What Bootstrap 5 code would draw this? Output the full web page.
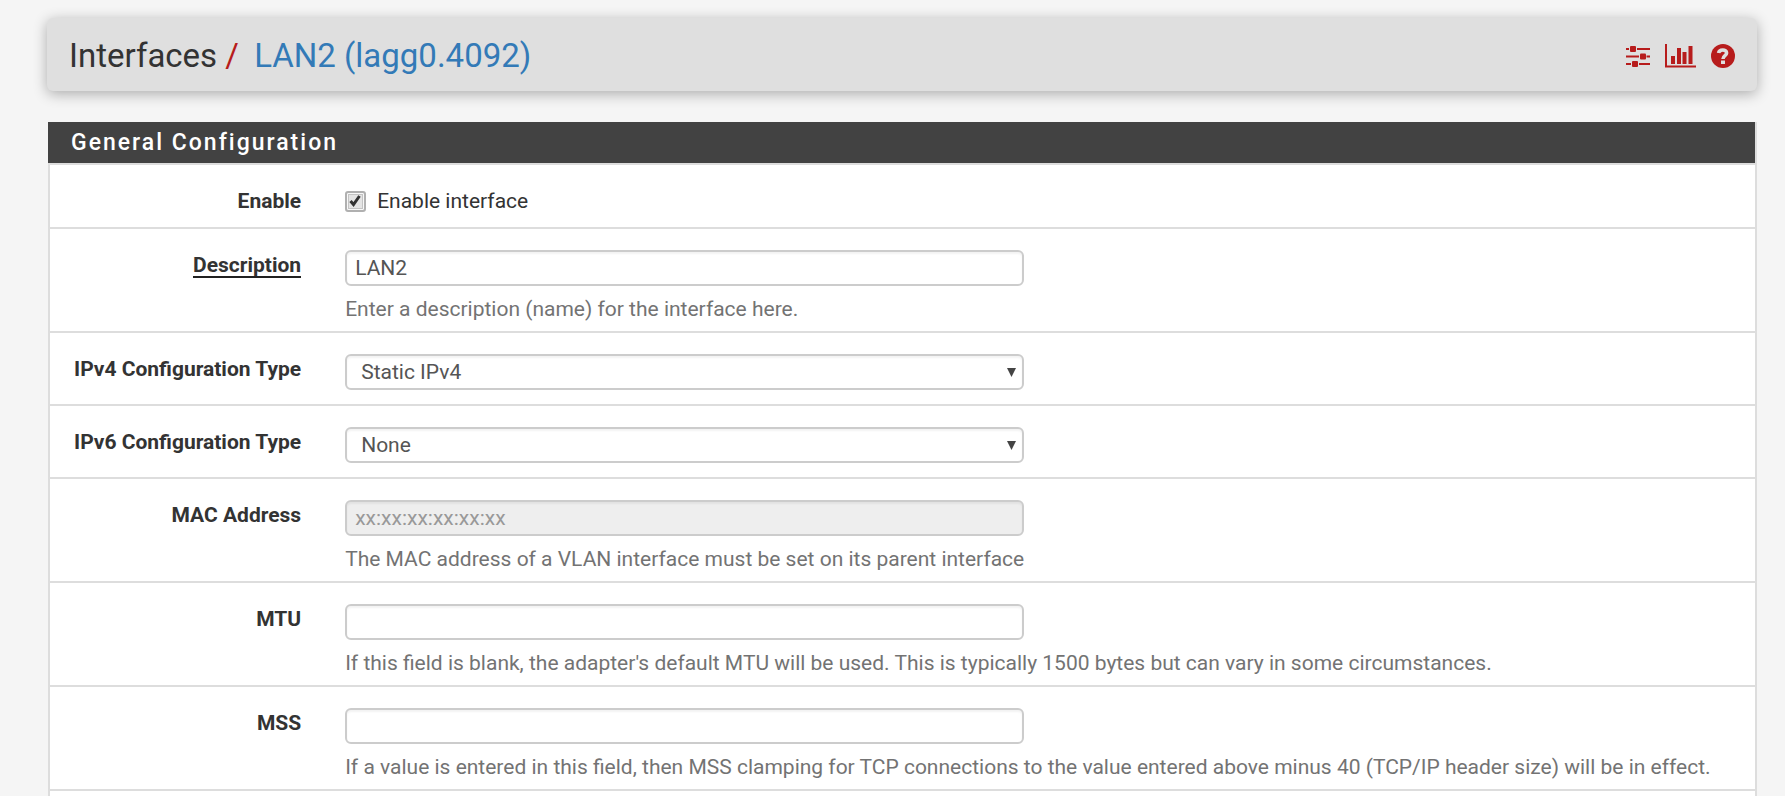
<!DOCTYPE html>
<html lang="en">
<head>
<meta charset="utf-8">
<meta name="viewport" content="width=device-width, initial-scale=1">
<title>Interfaces / LAN2 (lagg0.4092)</title>
<link rel="stylesheet" href="https://cdn.jsdelivr.net/npm/bootstrap@5.3.0/dist/css/bootstrap.min.css">
<style>
  body { background: #f5f5f5; color: #333; font-family: Roboto, "Liberation Sans", sans-serif; font-size: 21px; line-height: 30px; }
  .page { padding: 18px 28px 0 47px; }
  .page-header { background: #dfdfdf; border-radius: 6px; padding: 2px 22px 0 22px; min-height: 73px; margin-bottom: 31px; box-shadow: 0 3px 14px rgba(0,0,0,.3); }
  .page-header h1 { font-size: 33px; line-height: 40px; font-weight: 400; }
  .page-header h1 a { color: #337ab7; }
  .slash, .tools a { color: #b71c1c; }
  .slash { margin-right: 7px; }
  .tools { gap: 15px; }
  .tools svg { display: block; fill: currentColor; }
  .panel { background: #fff; border: 2px solid #ddd; border-width: 0 2px; margin-left: 1px; }
  .panel-title { background: #424242; color: #fff; font-size: 23px; line-height: 40px; font-weight: 500; letter-spacing: 2px; padding: 1px 23px 0; margin: 0 0 0 -2px; }
  .panel-body { border-top: 2px solid #ddd; }
  .field { border-bottom: 2px solid #ddd; padding: 21px 0 14px; }
  .field.has-help { padding-bottom: 7px; }
  .field.is-check { padding-bottom: 11px; }
  .field > .row { --bs-gutter-x: 44px; margin-left: -16px; margin-right: -14px; }
  .field label { line-height: 30px; }
  .name { font-weight: 700; }
  .required { border-bottom: 2px solid #212121; line-height: 22px; display: inline-block; }
  .field .form-control, .field .form-select { height: 36px; border: 2px solid #ccc; border-radius: 6px; padding: 0 8px; font-size: 21px; line-height: 30px; color: #555; box-shadow: inset 0 2px 2px rgba(0,0,0,.05); }
  .field .form-select { padding: 0 32px 0 14px; background: #fff url("data:image/svg+xml,%3Csvg xmlns='http://www.w3.org/2000/svg' viewBox='0 0 9 9'%3E%3Cpath fill='%23444' d='M0 0h9L4.500 9z'/%3E%3C/svg%3E") no-repeat right 6px center / 9px 9px; }
  .field .form-control:disabled { background: #eee; }
  .field .form-control::placeholder { color: #999; }
  .help { color: #737373; margin-top: 8px; }
  .field .tick { appearance: none; width: 21px; height: 21px; margin: 0 11px 0 0; border: 2px solid #b0b0b0; border-radius: 3px; background: #e8e8e8; box-shadow: inset 0 0 0 1px #f8f8f8, inset 0 0 0 2px #c4c4c4; }
  .field .tick:checked { background: #e4e4e4 url("data:image/svg+xml,%3Csvg xmlns='http://www.w3.org/2000/svg' viewBox='0 0 17 17'%3E%3Cpath fill='none' stroke='%23333' stroke-width='3' d='M3.500 8l3 3.500 6-8.500'/%3E%3C/svg%3E") center / 17px 17px no-repeat; }
</style>
</head>
<body>
<div class="page d-flex flex-column min-vh-100">
  <header class="page-header d-flex align-items-center justify-content-between">
    <h1 class="m-0">Interfaces <span class="slash">/</span> <a class="text-decoration-none" href="#">LAN2 (lagg0.4092)</a></h1>
    <nav class="tools d-flex align-items-center" aria-label="Page tools">
      <a href="#" aria-label="Related settings"><svg width="24" height="24" viewBox="0 0 24 24"><path d="M0 4h24v2H0zM0 11.500h24v2H0zM0 19h24v2H0z"/><path fill="#dfdfdf" d="M3 3h8v4H3zM13 10.500h7.500v4H13zM5 18h8v4H5z"/><rect x="4" y="2" width="6" height="6" rx="1"/><rect x="14" y="9.500" width="6" height="6" rx="1"/><rect x="6" y="17" width="6" height="6" rx="1"/></svg></a>
      <a href="#" aria-label="Related status"><svg width="31" height="24" viewBox="0 0 31 24"><path d="M0 0h2v21.500h29v2H0zM6 12h4v8H6zM12 4h4v16h-4zM17.500 8h4v12h-4zM23.500 2h4v18h-4z"/></svg></a>
      <a href="#" aria-label="Help"><svg width="24" height="24" viewBox="0 0 24 24"><circle cx="12" cy="12" r="12"/><path fill="none" stroke="#dfdfdf" stroke-width="3.600" d="M7.600 9C8.200 5.200 15.600 4.800 15.600 9c0 2.800-3.600 2.600-3.600 6"/><path fill="#dfdfdf" d="M10 16.500h4v3.500h-4z"/></svg></a>
    </nav>
  </header>

  <form class="panel flex-grow-1">
    <h2 class="panel-title">General Configuration</h2>
    <div class="panel-body">
      <div class="field is-check">
        <div class="row">
          <div class="col-2 text-end"><label class="name" for="enable">Enable</label></div>
          <div class="col-10"><label class="d-flex align-items-center"><input class="tick" type="checkbox" id="enable" checked>Enable interface</label></div>
        </div>
      </div>
      <div class="field has-help">
        <div class="row">
          <div class="col-2 text-end"><label class="name" for="descr"><span class="required">Description</span></label></div>
          <div class="col-5"><input class="form-control" type="text" id="descr" value="LAN2"></div>
          <div class="col-10 offset-2"><div class="help">Enter a description (name) for the interface here.</div></div>
        </div>
      </div>
      <div class="field">
        <div class="row">
          <div class="col-2 text-end"><label class="name" for="type4">IPv4 Configuration Type</label></div>
          <div class="col-5"><select class="form-select" id="type4"><option>Static IPv4</option></select></div>
        </div>
      </div>
      <div class="field">
        <div class="row">
          <div class="col-2 text-end"><label class="name" for="type6">IPv6 Configuration Type</label></div>
          <div class="col-5"><select class="form-select" id="type6"><option>None</option></select></div>
        </div>
      </div>
      <div class="field has-help">
        <div class="row">
          <div class="col-2 text-end"><label class="name" for="mac">MAC Address</label></div>
          <div class="col-5"><input class="form-control" type="text" id="mac" placeholder="xx:xx:xx:xx:xx:xx" disabled></div>
          <div class="col-10 offset-2"><div class="help">The MAC address of a VLAN interface must be set on its parent interface</div></div>
        </div>
      </div>
      <div class="field has-help">
        <div class="row">
          <div class="col-2 text-end"><label class="name" for="mtu">MTU</label></div>
          <div class="col-5"><input class="form-control" type="text" id="mtu"></div>
          <div class="col-10 offset-2"><div class="help">If this field is blank, the adapter's default MTU will be used. This is typically 1500 bytes but can vary in some circumstances.</div></div>
        </div>
      </div>
      <div class="field has-help">
        <div class="row">
          <div class="col-2 text-end"><label class="name" for="mss">MSS</label></div>
          <div class="col-5"><input class="form-control" type="text" id="mss"></div>
          <div class="col-10 offset-2"><div class="help">If a value is entered in this field, then MSS clamping for TCP connections to the value entered above minus 40 (TCP/IP header size) will be in effect.</div></div>
        </div>
      </div>
    </div>
  </form>
</div>
<script src="https://cdn.jsdelivr.net/npm/bootstrap@5.3.0/dist/js/bootstrap.bundle.min.js"></script>
</body>
</html>
